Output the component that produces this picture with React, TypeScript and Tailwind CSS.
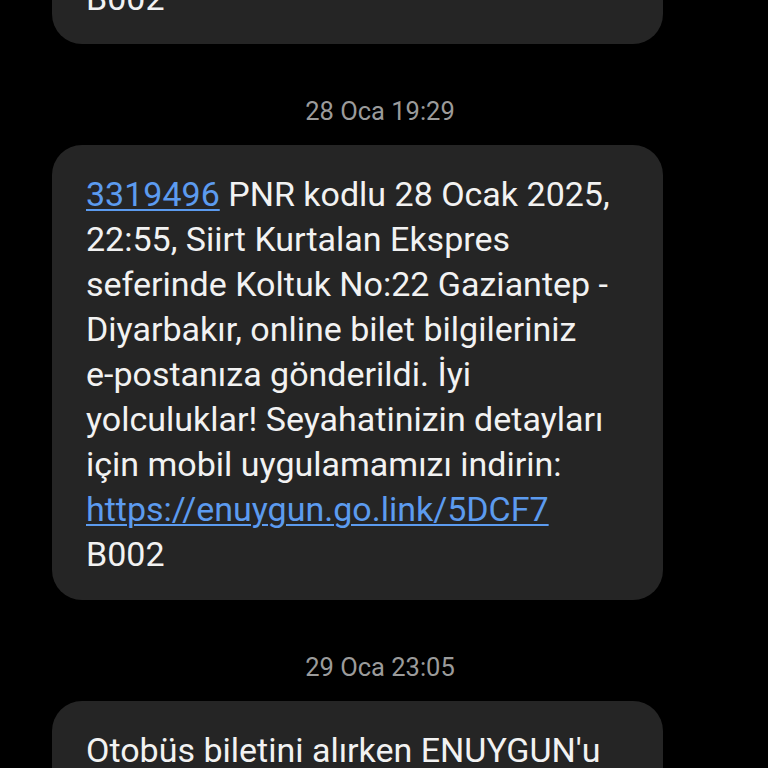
const font = { fontFamily: "Roboto, 'Noto Sans', sans-serif" }

function Link({ children }: { children: React.ReactNode }) {
  return <span className="text-[#5c9bef] underline decoration-[1.5px] underline-offset-[3px]">{children}</span>
}

function Bubble({ children, className = "" }: { children: React.ReactNode; className?: string }) {
  return (
    <div className={`mx-[52px] w-[611px] rounded-[30px] bg-[#252525] pl-[34px] pr-[20px] pt-[27px] pb-[23px] text-[34px] leading-[45px] text-[#f2f2f2] whitespace-nowrap ${className}`}>
      {children}
    </div>
  )
}

function Stamp({ children }: { children: React.ReactNode }) {
  return (
    <div className="pt-[52px] pb-[19px] pr-[8px] text-center text-[25.5px] leading-[30px] text-[#9b9b9b]">
      {children}
    </div>
  )
}

export default function App() {
  return (
    <div className="h-[768px] w-[768px] overflow-hidden bg-black" style={font}>
      <Bubble className="-mt-[51px]">B002</Bubble>
      <Stamp>28 Oca 19:29</Stamp>
      <Bubble>
        <Link>3319496</Link> PNR kodlu 28 Ocak 2025,
        <br />
        22:55, Siirt Kurtalan Ekspres
        <br />
        seferinde Koltuk No:22 Gaziantep -
        <br />
        Diyarbakır, online bilet bilgileriniz
        <br />
        e-postanıza gönderildi. İyi
        <br />
        yolculuklar! Seyahatinizin detayları
        <br />
        için mobil uygulamamızı indirin:
        <br />
        <Link>https://enuygun.go.link/5DCF7</Link>
        <br />
        B002
      </Bubble>
      <Stamp>29 Oca 23:05</Stamp>
      <Bubble>
        Otobüs biletini alırken ENUYGUN'u
        <br />
        tercih ettiğiniz için teşekkür ederiz.
      </Bubble>
    </div>
  )
}
